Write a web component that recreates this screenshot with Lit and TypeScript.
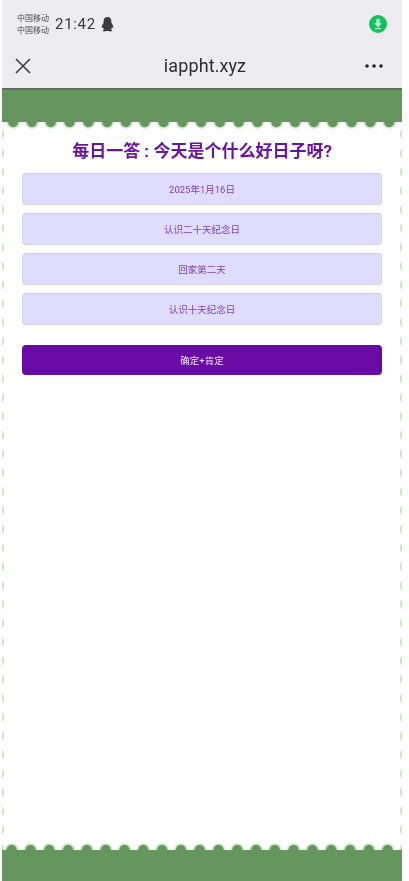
import { LitElement, html, css } from "lit";
import { customElement } from "lit/decorators.js";

const OPTIONS = ["2025年1月16日", "认识二十天纪念日", "回家第二天", "认识十天纪念日"];

@customElement("app-root")
export class AppRoot extends LitElement {
  static styles = css`
    :host {
      display: block;
      width: 409px;
      height: 881px;
      background: #fff;
      overflow: hidden;
      font-family: Roboto, "Noto Sans CJK SC", sans-serif;
    }
    .frame {
      width: 400px;
      height: 881px;
      margin-left: 2px;
      display: flex;
      flex-direction: column;
      filter: blur(0.35px);
    }
    .status {
      height: 45px;
      flex: none;
      background: #edecee;
      display: flex;
      align-items: center;
      padding: 1px 15px 0 15px;
      box-sizing: border-box;
    }
    .carrier {
      font-size: 8px;
      line-height: 12px;
      color: #4a4a4a;
      width: 38px;
      flex: none;
      margin-top: 3px;
    }
    .time {
      font-size: 15px;
      color: #3a3a3a;
      letter-spacing: 0.7px;
      margin-top: 2px;
    }
    .penguin {
      margin-left: 5px;
      margin-top: 2px;
    }
    .dl {
      margin-left: auto;
      margin-top: 2px;
      margin-right: 0;
    }
    .nav {
      height: 45px;
      flex: none;
      background: #edecee;
      border-bottom: 2px solid #676a66;
      box-sizing: border-box;
      display: grid;
      grid-template-columns: 60px 1fr 60px;
      align-items: center;
      padding: 0 0 2px 13px;
      margin-bottom: 0;
    }
    .nav-title {
      text-align: center;
      font-size: 18px;
      color: #2e2e2e;
      letter-spacing: 0.1px;
      margin-left: -7px;
    }
    .more {
      justify-self: end;
      margin-right: 19px;
    }
    .band {
      height: 32px;
      flex: none;
      background: #64965d;
    }
    .card {
      flex: 1;
      display: flex;
      flex-direction: column;
      background-color: #fff;
      background-image:
        radial-gradient(ellipse 2px 5px at 0 50%, #cfe6c8 92%, transparent 100%),
        radial-gradient(ellipse 2px 5px at 100% 50%, #cfe6c8 92%, transparent 100%);
      background-size: 3px 18.8px, 3px 18.8px;
      background-position: left 3px, right 3px;
      background-repeat: repeat-y;
    }
    .scallop {
      height: 9px;
      flex: none;
      background-size: 18.8px 9px;
      background-repeat: repeat-x;
    }
    .scallop.top {
      background-image: radial-gradient(
        circle at 50% 0,
        #64965d 0,
        #64965d 4.6px,
        #cfe6c8 5.6px,
        #e4f1e0 6.6px,
        transparent 7.6px
      );
      background-position: 1.8px 0;
    }
    .scallop.bottom {
      background-image: radial-gradient(
        circle at 50% 100%,
        #64965d 0,
        #64965d 4.6px,
        #cfe6c8 5.6px,
        #e4f1e0 6.6px,
        transparent 7.6px
      );
      background-position: 0.3px 0;
    }
    .content {
      flex: 1;
      padding: 0 20px;
      display: flex;
      flex-direction: column;
    }
    h1 {
      margin: 7px 0 0;
      font-size: 17px;
      line-height: 26px;
      font-weight: 700;
      color: #6a12a6;
      text-align: center;
    }
    .options {
      margin-top: 9px;
      display: flex;
      flex-direction: column;
      gap: 8px;
    }
    .opt {
      height: 32px;
      box-sizing: border-box;
      background: #e0dcfd;
      border: 1px solid #d6d3ee;
      border-top: 1.5px solid #cfccdf;
      border-radius: 4px;
      font-size: 9.5px;
      color: #7b3cae;
      display: flex;
      align-items: center;
      justify-content: center;
    }
    .submit {
      margin-top: 20px;
      height: 30px;
      background: #6a0aa5;
      border-radius: 4px;
      color: #f2e6fa;
      font-size: 9.5px;
      display: flex;
      align-items: center;
      justify-content: center;
    }
    .footer {
      height: 31px;
      flex: none;
      background: #64965d;
    }
  `;

  render() {
    return html`
      <div class="frame">
        <div class="status">
          <div class="carrier">中国移动<br />中国移动</div>
          <div class="time">21:42</div>
          <svg class="penguin" width="13" height="15" viewBox="0 0 13 15">
            <path
              fill="#3a3a3a"
              d="M6.5 0C3.9 0 2.6 2 2.6 4.4c0 .6 0 1.2-.1 1.7C1.4 7.6.6 9.2.7 10.5c.1.7.6.7 1.3-.2.2.9.6 1.600 1.200 2.100-.9.300-1.500.800-1.300 1.400.2.600 1.400.700 2.500.500.700-.100 1.300-.300 1.600-.300h1c.300 0 .900.200 1.600.300 1.100.200 2.300.100 2.500-.500.200-.600-.400-1.100-1.300-1.400.600-.500 1-1.200 1.200-2.100.700.900 1.200.900 1.300.200.100-1.300-.700-2.900-1.800-4.400-.100-.500-.100-1.100-.100-1.700C10.400 2 9.100 0 6.500 0z"
            />
          </svg>
          <svg class="dl" width="18" height="18" viewBox="0 0 18 18">
            <circle cx="9" cy="9" r="9" fill="#12c15c" />
            <path fill="#bdeccd" d="M7.300 3.800h3.400v4.400h2.100L9 12.400 5.200 8.200h2.100z" />
            <rect x="6" y="13" width="6" height="1.200" fill="#bdeccd" />
          </svg>
        </div>
        <div class="nav">
          <svg width="16" height="16" viewBox="0 0 16 16">
            <path d="M1 1l14 14M15 1L1 15" stroke="#3a3a3a" stroke-width="1.500" fill="none" />
          </svg>
          <div class="nav-title">iappht.xyz</div>
          <svg class="more" width="18" height="4" viewBox="0 0 18 4">
            <circle cx="2" cy="2" r="1.800" fill="#222" />
            <circle cx="9" cy="2" r="1.800" fill="#222" />
            <circle cx="16" cy="2" r="1.800" fill="#222" />
          </svg>
        </div>
        <div class="band"></div>
        <div class="card">
          <div class="scallop top"></div>
          <div class="content">
            <h1>每日一答 : 今天是个什么好日子呀?</h1>
            <div class="options">
              ${OPTIONS.map((o) => html`<div class="opt">${o}</div>`)}
            </div>
            <div class="submit">确定+肯定</div>
          </div>
          <div class="scallop bottom"></div>
        </div>
        <div class="footer"></div>
      </div>
    `;
  }
}
